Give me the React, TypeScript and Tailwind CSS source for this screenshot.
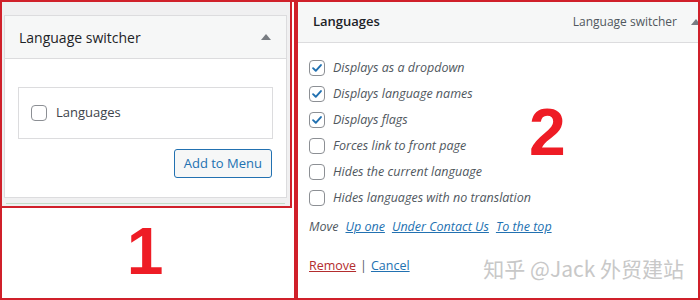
import React from 'react';

const font = { fontFamily: '"Open Sans", "Noto Sans", "Noto Sans CJK SC", sans-serif' };

function Box({ checked }: { checked?: boolean }) {
  return (
    <span className="w-4 h-4 rounded-[4px] border border-[#8c8f94] bg-white flex items-center justify-center shrink-0">
      {checked && (
        <svg viewBox="0 0 16 16" className="w-[14px] h-[14px]">
          <path d="M3.5 8.2 L6.6 11.2 L12.5 4.6" fill="none" stroke="#2271b1" strokeWidth="2.2" strokeLinecap="round" strokeLinejoin="round" />
        </svg>
      )}
    </span>
  );
}

const options = [
  { label: 'Displays as a dropdown', checked: true },
  { label: 'Displays language names', checked: true },
  { label: 'Displays flags', checked: true },
  { label: 'Forces link to front page', checked: false },
  { label: 'Hides the current language', checked: false },
  { label: 'Hides languages with no translation', checked: false },
];

export default function App() {
  return (
    <div className="w-[700px] h-[300px] flex bg-white text-[#1d2327]" style={font}>
      {/* area 1 */}
      <div className="w-[296px] h-full border-2 border-[#d0202a] flex flex-col">
        <div className="w-[290px] h-[206px] border-r-2 border-b-2 border-[#d0202a] bg-[#f0f0f1] pt-[13px] pl-[2px] pr-[3px] flex flex-col">
          <div className="h-[183px] border border-[#dcdcde] bg-white flex flex-col">
            <div className="h-[43px] bg-[#f6f7f7] border-b border-[#dcdcde] flex items-center justify-between pl-[14px] pr-[15px]">
              <span className="text-[14px]">Language switcher</span>
              <span className="w-0 h-0 border-l-[5px] border-r-[5px] border-b-[6px] border-l-transparent border-r-transparent border-b-[#787c82]" />
            </div>
            <div className="px-[13px] pt-[28px]">
              <div className="h-[52px] border border-[#dcdcde] flex items-center gap-[9px] pl-[12px]">
                <Box />
                <span className="text-[13px] text-[#3c434a]">Languages</span>
              </div>
              <div className="flex justify-end mt-[10px] pr-[1px]">
                <button className="h-[29px] px-[9px] rounded-[3px] border border-[#2271b1] bg-[#f6f7f7] text-[#2271b1] text-[13px]">
                  Add to Menu
                </button>
              </div>
            </div>
          </div>
          <div className="mt-[5px] mx-[2px] h-px bg-[#c3dcc8]" />
        </div>
        <div className="flex-1 flex items-center justify-center pr-[6px] pb-[4px]">
          <span className="text-[66px] font-bold text-[#ee1c25] leading-none" style={{ fontFamily: '"Liberation Sans", Arial, sans-serif' }}>1</span>
        </div>
      </div>

      {/* area 2 */}
      <div className="flex-1 h-full border-2 border-[#d0202a] flex flex-col overflow-hidden">
        <div className="h-[41px] bg-[#f6f7f7] border-b border-[#dcdcde] flex items-center justify-between pl-[15px]">
          <span className="text-[13px] font-semibold">Languages</span>
          <div className="flex items-center gap-[14px] mr-[-3px]">
            <span className="text-[12px] text-[#50575e]">Language switcher</span>
            <span className="w-0 h-0 border-l-[5px] border-r-[5px] border-b-[6px] border-l-transparent border-r-transparent border-b-[#787c82]" />
          </div>
        </div>
        <div className="relative flex-1 pl-[11px] pt-[17px]">
          <div className="flex flex-col gap-[10px]">
            {options.map((o) => (
              <div key={o.label} className="flex items-center gap-[8px] h-[16px]">
                <Box checked={o.checked} />
                <span className="text-[12.5px] italic text-[#50575e]">{o.label}</span>
              </div>
            ))}
          </div>
          <div className="flex items-center gap-[7px] mt-[12px] text-[12.5px] italic">
            <span className="text-[#50575e]">Move</span>
            <span className="text-[#2271b1] underline">Up one</span>
            <span className="text-[#2271b1] underline">Under Contact Us</span>
            <span className="text-[#2271b1] underline">To the top</span>
          </div>
          <div className="flex items-center gap-[4px] mt-[20px] text-[12.5px]">
            <span className="text-[#b32d2e] underline">Remove</span>
            <span className="text-[#50575e]">|</span>
            <span className="text-[#2271b1] underline">Cancel</span>
          </div>
          <span className="absolute left-[231px] top-[56px] text-[66px] font-bold text-[#ee1c25] leading-none" style={{ fontFamily: '"Liberation Sans", Arial, sans-serif' }}>2</span>
          <span className="absolute right-[14px] bottom-[14px] text-[21px] text-[#c8c8c8]" style={{ fontFamily: '"Noto Sans CJK SC", sans-serif' }}>知乎 @Jack 外贸建站</span>
        </div>
      </div>
    </div>
  );
}
